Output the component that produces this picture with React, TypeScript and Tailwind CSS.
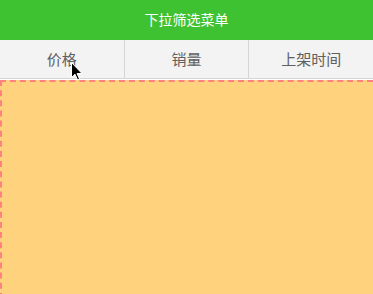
import React from "react";

const TABS = ["价格", "销量", "上架时间"];

function Cursor() {
  return (
    <svg
      className="absolute left-[71px] top-[62px]"
      width="12"
      height="19"
      viewBox="0 0 12 19"
    >
      <path
        d="M0.5 0.5 L0.5 15.5 L4 12.2 L6.6 18 L8.6 17.1 L6.1 11.5 L11 11.5 Z"
        fill="#000"
        stroke="#fff"
        strokeWidth="1"
      />
    </svg>
  );
}

export default function App() {
  return (
    <div className="relative h-[294px] w-[373px] overflow-hidden bg-white font-['Noto_Sans_CJK_SC',sans-serif]">
      <div className="flex h-10 items-center justify-center bg-[#3fc232] pb-[2px] text-[14px] text-white">
        下拉筛选菜单
      </div>
      <div className="flex h-[39px] border-b border-[#d5d5d5] bg-[#f3f3f3]">
        {TABS.map((name, idx) => (
          <div
            key={name}
            className={`flex flex-1 items-center justify-center text-[15px] text-[#606060] ${idx > 0 ? "border-l border-[#d5d5d5]" : ""}`}
          >
            {name}
          </div>
        ))}
      </div>
      <div className="mt-px h-[300px] border-l-2 border-t-2 border-dashed border-[#ff8080] bg-[#ffd27d]" />
      <Cursor />
    </div>
  );
}
